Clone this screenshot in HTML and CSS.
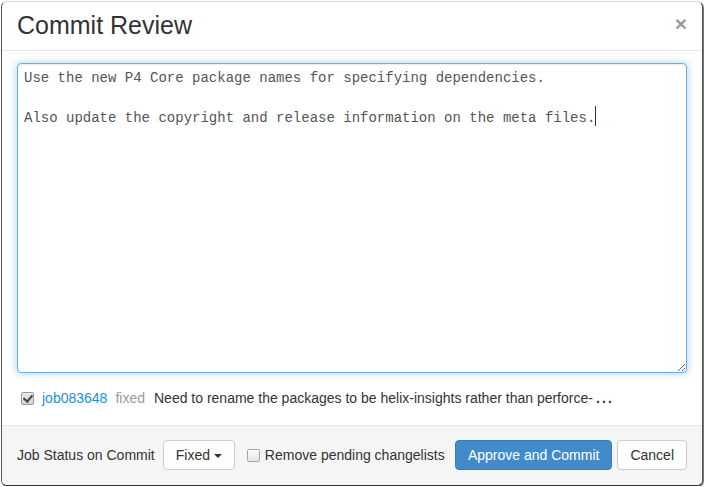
FILE: index.html
```html
<!DOCTYPE html>
<html lang="en">
<head>
<meta charset="utf-8">
<title>Commit Review</title>
<link rel="stylesheet" href="styles.css">
</head>
<body>
<div class="modal">
  <div class="modal-header">
    <h4 class="modal-title">Commit Review</h4>
    <button class="close" type="button">&times;</button>
  </div>
  <div class="modal-body">
    <div class="editor">
      <textarea class="message" spellcheck="false">Use the new P4 Core package names for specifying dependencies.

Also update the copyright and release information on the meta files.</textarea>
      <span class="text-caret"></span>
    </div>
    <div class="job-row">
      <input class="check job-check" type="checkbox" checked>
      <a class="job-id" href="#">job083648</a>
      <span class="job-status">fixed</span>
      <span class="job-desc">Need to rename the packages to be helix-insights rather than perforce-</span><span class="job-more">...</span>
    </div>
  </div>
  <div class="modal-footer">
    <span class="status-label">Job Status on Commit</span>
    <button class="btn btn-default" type="button">Fixed <span class="caret"></span></button>
    <label class="check-label"><input class="check footer-check" type="checkbox">Remove pending changelists</label>
    <div class="actions">
      <button class="btn btn-primary" type="button">Approve and Commit</button>
      <button class="btn btn-default" type="button">Cancel</button>
    </div>
  </div>
</div>
</body>
</html>
```
FILE: styles.css
```css
* {
  box-sizing: border-box;
}

html, body {
  margin: 0;
  padding: 0;
  background: #fff;
}

body {
  font-family: "Liberation Sans", Arial, sans-serif;
  font-size: 14px;
  line-height: 20px;
  color: #333;
}

.modal {
  margin: 1px 0 0 1px;
  width: 702px;
  background: #fff;
  border: 1px solid;
  border-color: #d6d6d6 #555 #333 #555;
  border-radius: 6px;
  box-shadow: 1px 1px 1px rgba(0, 0, 0, 0.6);
}

.modal-header {
  display: flex;
  align-items: center;
  justify-content: space-between;
  padding: 10px 15px 12px;
  border-bottom: 1px solid #e5e5e5;
}

.modal-title {
  margin: 0;
  font-size: 25px;
  font-weight: normal;
  line-height: 26px;
  color: #333;
}

.close {
  margin-top: -3px;
  padding: 0;
  border: 0;
  background: none;
  font-family: "Liberation Sans", Arial, sans-serif;
  font-size: 21px;
  font-weight: bold;
  line-height: 1;
  color: #000;
  opacity: 0.4;
}

.modal-body {
  padding: 12px 15px 17px;
}

.editor {
  position: relative;
}

.message {
  display: block;
  width: 100%;
  height: 310px;
  margin: 0;
  padding: 4px 6px;
  font-family: "Liberation Mono", "Courier New", monospace;
  font-size: 14px;
  line-height: 20px;
  color: #555;
  background: #fff;
  border: 1px solid #66afe9;
  border-radius: 4px;
  outline: none;
  box-shadow: inset 0 1px 1px rgba(0, 0, 0, 0.075), 0 0 8px rgba(102, 175, 233, 0.6);
}

.text-caret {
  position: absolute;
  left: 578px;
  top: 43px;
  width: 1px;
  height: 20px;
  background: #333;
}

.check {
  appearance: none;
  -webkit-appearance: none;
  position: relative;
  flex: none;
  width: 13px;
  height: 13px;
  margin: 0;
  border: 1px solid #a6a6a6;
  border-radius: 2px;
  background: linear-gradient(#fcfcfc, #e6e6e6);
}

.check:checked {
  background: linear-gradient(#e8e8e8, #d2d2d2);
  border-color: #9a9a9a;
}

.check:checked::after {
  content: "";
  position: absolute;
  left: 3px;
  top: 0px;
  width: 4px;
  height: 7px;
  border-right: 2px solid #444;
  border-bottom: 2px solid #444;
  transform: rotate(40deg);
}

.job-row {
  display: flex;
  align-items: center;
  gap: 8px;
  margin-top: 15px;
  padding-left: 4px;
  line-height: 20px;
  white-space: nowrap;
}

.job-id {
  color: #1e8fd6;
  text-decoration: none;
}

.job-status {
  color: #999;
}

.job-desc {
  margin-left: 1px;
  color: #333;
}

.job-more {
  margin-left: -5px;
  font-weight: bold;
  letter-spacing: 2.2px;
  color: #333;
}

.modal-footer {
  display: flex;
  align-items: center;
  gap: 8px;
  padding: 14px 15px 15px;
  background: #f5f5f5;
  border-top: 1px solid #e5e5e5;
  border-radius: 0 0 5px 5px;
}

.status-label {
  color: #333;
}

.check-label {
  display: inline-flex;
  align-items: center;
  color: #333;
}

.footer-check {
  margin: 0 5px 0 4px;
}

.actions {
  display: flex;
  gap: 5px;
  margin-left: auto;
}

.btn {
  display: inline-block;
  margin: 0;
  padding: 4px 12px;
  font-family: "Liberation Sans", Arial, sans-serif;
  font-size: 14px;
  line-height: 20px;
  border: 1px solid transparent;
  border-radius: 4px;
  white-space: nowrap;
}

.btn-default {
  color: #333;
  background: #fff;
  border-color: #ccc;
}

.btn-primary {
  color: #fff;
  background: #428bca;
  border-color: #357ebd;
}

.caret {
  display: inline-block;
  width: 0;
  height: 0;
  vertical-align: middle;
  border-top: 4px solid #333;
  border-right: 4px solid transparent;
  border-left: 4px solid transparent;
}
```
